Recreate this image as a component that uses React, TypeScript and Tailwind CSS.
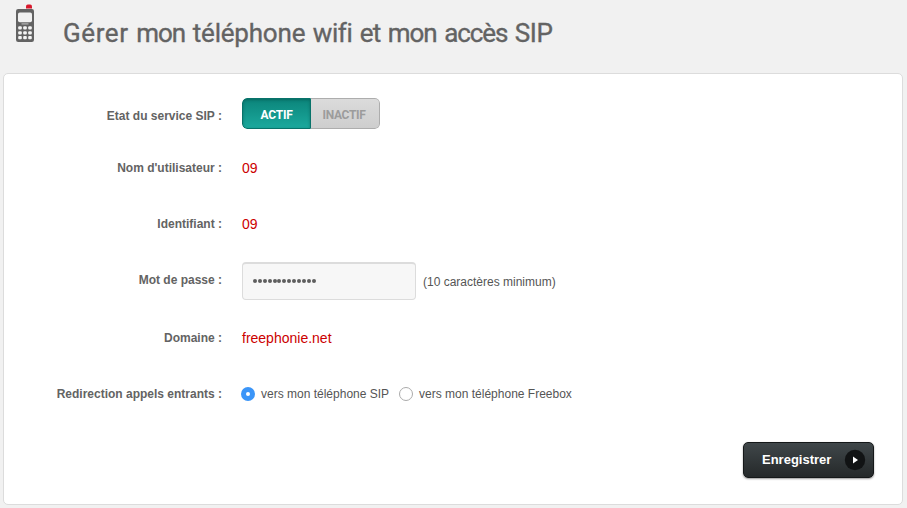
import type { ReactNode } from "react";

function PhoneIcon() {
  return (
    <svg width="20" height="40" viewBox="0 0 20 40" className="mt-[3px] ml-[15px] block shrink-0">
      <path d="M11 5.4V3.4Q11 1.6 12.8 1.6H15.2Q17 1.6 17 3.4V5.4Z" fill="#d8182c" />
      <rect x="1" y="6" width="18" height="33" rx="2.2" fill="#636363" />
      <rect x="3" y="9.5" width="14" height="9.8" rx="1.8" fill="#f1f1f1" />
      <rect x="6.5" y="20.3" width="7" height="1.2" fill="#b5b5b5" />
      {[23.3, 28.3, 33].map((y) =>
        [3.2, 8.2, 13.2].map((x) => (
          <rect key={`${x}-${y}`} x={x} y={y} width="3.6" height="3.2" rx="1" fill="#f4f4f4" />
        )),
      )}
    </svg>
  );
}

function Row({ label, height, labelClass = "", children }: { label: string; height: string; labelClass?: string; children: ReactNode }) {
  return (
    <div className={`flex items-center ${height}`}>
      <div className={`w-[218px] shrink-0 text-right text-[12px] leading-4 font-bold whitespace-nowrap text-[#636363] ${labelClass}`}>
        {label}
      </div>
      <div className="ml-5 flex items-center">{children}</div>
    </div>
  );
}

function Value({ children }: { children: ReactNode }) {
  return <span className="text-[14px] leading-4 text-[#cc0000]">{children}</span>;
}

function Radio({ checked }: { checked?: boolean }) {
  return checked ? (
    <span className="flex size-[14px] shrink-0 items-center justify-center rounded-full bg-[#3b95f8]">
      <span className="size-1 rounded-full bg-white" />
    </span>
  ) : (
    <span className="size-[14px] shrink-0 rounded-full border border-[#ababab] bg-white" />
  );
}

export default function App() {
  return (
    <div className="h-[508px] w-[907px] overflow-hidden bg-[#f1f1f1] font-['Liberation_Sans',Arial,sans-serif]">
      <header className="flex h-[73px] items-start">
        <PhoneIcon />
        <h1 className="mt-[17px] ml-[28px] text-[26px] leading-8 font-normal tracking-[-0.42px] whitespace-nowrap text-[#636363] [word-spacing:1.5px] [-webkit-text-stroke:0.35px_#636363] font-['Roboto',sans-serif]">
          <span className="tracking-[0.6px]">Gérer</span> <span className="tracking-[-1px]">mon</span>{" "}
          <span className="tracking-[-0.2px]">téléphone</span> wifi <span className="tracking-[-1px]">et</span>{" "}
          <span className="tracking-[-1px]">mon</span> <span className="tracking-[-1.1px]">accès</span> SIP
        </h1>
      </header>
      <main className="ml-[3px] h-[432px] w-[900px] rounded-[5px] border border-[#dcdcdc] bg-white pt-[13px]">
        <Row label="Etat du service SIP :" height="h-[54px]" labelClass="pt-[3px]">
          <div className="mb-[2px] flex h-[31px] w-[138px] overflow-hidden rounded-[5px] font-['Roboto',sans-serif] text-[12px] font-bold">
            <div className="flex w-[69px] items-center justify-center rounded-l-[5px] border border-[#08736a] bg-linear-to-b from-[#0b857b] to-[#1ba99d] pt-[4px] tracking-[-0.2px] text-white shadow-[inset_0_1px_3px_rgba(0,60,55,0.4)]">
              ACTIF
            </div>
            <div className="flex w-[69px] items-center justify-center rounded-r-[5px] border border-l-0 border-[#adadad] bg-linear-to-b from-[#dbdbdb] to-[#cecece] pt-[4px] pr-[2px] tracking-[-0.3px] text-[#9c9c9c]">
              INACTIF
            </div>
          </div>
        </Row>
        <Row label="Nom d'utilisateur :" height="h-[54px]">
          <Value>09</Value>
        </Row>
        <Row label="Identifiant :" height="h-[58px]">
          <Value>09</Value>
        </Row>
        <Row label="Mot de passe :" height="h-[56px]" labelClass="pb-[2px]">
          <div className="flex h-[38px] w-[174px] items-center gap-[0.9px] rounded-[4px] border border-t-2 border-[#dcdcdc] bg-[#f7f7f7] pb-[2px] pl-[10px]">
            {Array.from({ length: 13 }, (_, i) => (
              <span key={i} className="size-1 rounded-full bg-[#5e5e5e]" />
            ))}
          </div>
          <span className="ml-[7px] pt-[2px] text-[12px] text-[#555]">(10 caractères minimum)</span>
        </Row>
        <Row label="Domaine :" height="h-[58px]">
          <Value>freephonie.net</Value>
        </Row>
        <Row label="Redirection appels entrants :" height="h-[54px]">
          <div className="-ml-px flex items-center text-[12px] leading-4 text-[#555]">
            <Radio checked />
            <span className="ml-[6px]">vers mon téléphone SIP</span>
            <span className="w-[10px]" />
            <Radio />
            <span className="ml-[6px]">vers mon téléphone Freebox</span>
          </div>
        </Row>
        <div className="mt-[21px] mr-[28px] flex justify-end">
          <button className="flex h-[36px] w-[131px] items-center rounded-[5px] border border-[#151819] bg-linear-to-b from-[#40474a] to-[#25292a] pl-[18px] text-[13px] font-bold text-white shadow-[0_1px_2px_rgba(0,0,0,0.4)]">
            <span>Enregistrer</span>
            <svg width="22" height="22" viewBox="0 0 22 22" className="ml-[13px]">
              <circle cx="11" cy="11" r="10.2" fill="#111314" />
              <path d="M9 7.5L14 11L9 14.5Z" fill="#fff" />
            </svg>
          </button>
        </div>
      </main>
    </div>
  );
}
